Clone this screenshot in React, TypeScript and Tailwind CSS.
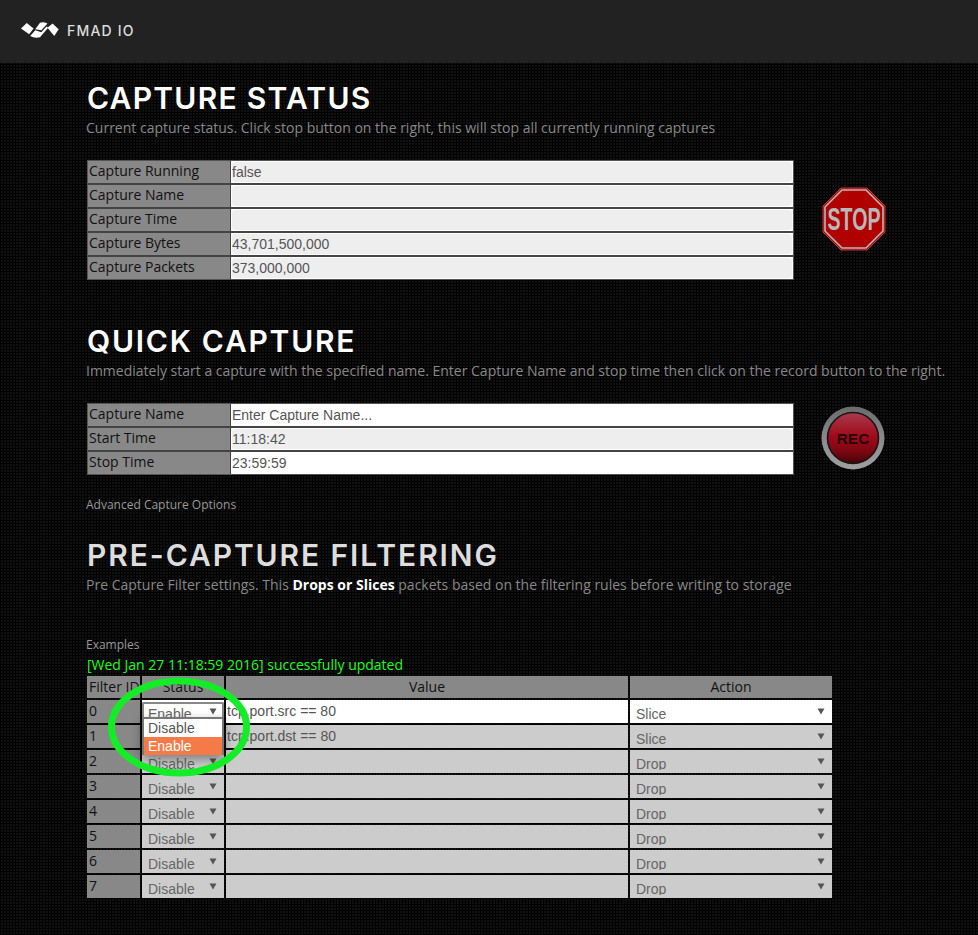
const Caret = () => (
  <svg width="8" height="7" viewBox="0 0 8 7" className="absolute right-[7px] top-[8px]">
    <path d="M0.5 0.5H7.5L4 6.5Z" fill="#555" />
  </svg>
);

const Logo = () => (
  <svg width="38" height="17" viewBox="20 22 112 48">
    <g fill="#fff">
      <path d="M20 40L37 24L57 40L44 57Z" />
      <path d="M62 42L76 23Q87 20 98 25L80 45Z" />
      <path d="M47 62L62 45L80 51L95 34L100 38L76 66Q60 70 47 62Z" />
      <path d="M98 38L113 25L131 42L118 62Z" />
    </g>
  </svg>
);

const StopSign = () => (
  <svg width="64" height="64" viewBox="0 0 64 64" className="-mt-[2px] shrink-0">
    <path d="M19 1H45L63 19V45L45 63H19L1 45V19Z" fill="#b00000" stroke="#c23c3c" strokeWidth="1" />
    <path d="M20 3H44L61 20V44L44 61H20L3 44V20Z" fill="#b00000" stroke="#b8b8b8" strokeWidth="1.6" />
    <text x="32" y="43" textAnchor="middle" fontFamily="'Liberation Sans', sans-serif" fontWeight="700" fontSize="31" fill="#b8b8b8" textLength="53" lengthAdjust="spacingAndGlyphs">STOP</text>
  </svg>
);

const RecButton = () => (
  <svg width="64" height="64" viewBox="0 0 64 64" className="-mt-[3px] shrink-0">
    <defs>
      <linearGradient id="ring" x1="0" y1="0" x2="0" y2="1">
        <stop offset="0" stopColor="#6a6a6a" />
        <stop offset="0.5" stopColor="#8a8a8a" />
        <stop offset="1" stopColor="#a0a0a0" />
      </linearGradient>
      <linearGradient id="red" x1="0" y1="0" x2="0" y2="1">
        <stop offset="0" stopColor="#a83c4c" />
        <stop offset="0.45" stopColor="#a00c1c" />
        <stop offset="0.75" stopColor="#800612" />
        <stop offset="1" stopColor="#450308" />
      </linearGradient>
    </defs>
    <circle cx="32" cy="32" r="31.5" fill="url(#ring)" />
    <circle cx="32" cy="32" r="25.5" fill="url(#red)" stroke="#161616" strokeWidth="1.6" />
    <text x="32" y="37.5" textAnchor="middle" fontFamily="'Liberation Sans', sans-serif" fontWeight="700" fontSize="15.5" fill="#2a0408">REC</text>
  </svg>
);

const InfoRow = ({ label, value, white }: { label: string; value: string; white?: boolean }) => (
  <div className="flex h-6 border-b-2 border-[#444] last:h-[22px] last:border-b-0">
    <div className="w-[142px] shrink-0 bg-[#888] pl-[1px] text-[14px] leading-[20px] text-[#111] font-['Open_Sans',sans-serif]">{label}</div>
    <div className="w-[1px] shrink-0 bg-[#444]" />
    <div className="flex-1 bg-white p-[1px]">
      <div className={`h-full rounded-[3px] text-[14px] leading-[21px] text-[#555] font-['Liberation_Sans',sans-serif] ${white ? "bg-white" : "bg-[#eee]"}`}>{value}</div>
    </div>
  </div>
);

const InfoTable = ({ children }: { children: React.ReactNode }) => (
  <div className="w-[707px] border border-[#555] bg-white">{children}</div>
);

const Heading = ({ children, className }: { children: string; className: string }) => (
  <h2 className={`whitespace-nowrap text-[30px] leading-[38px] font-semibold font-['Inter',sans-serif] ${className}`}>{children}</h2>
);

const Desc = ({ children }: { children: React.ReactNode }) => (
  <p className="whitespace-nowrap text-[14px] leading-[20px] text-[#888] font-['Open_Sans',sans-serif]">{children}</p>
);

const Select = ({ value, white }: { value: string; white?: boolean }) => (
  <div className={`relative h-full pl-[6px] text-[14px] text-[#666] font-['Liberation_Sans',sans-serif] ${white ? "bg-white" : "bg-[#ccc]"}`}>
    <div className="h-[20px] overflow-hidden leading-[29px]">{value}</div>
    <Caret />
  </div>
);

const rows = [
  { id: "0", status: "Enable", value: "tcp.port.src == 80", action: "Slice", white: true },
  { id: "1", status: "Enable", value: "tcp.port.dst == 80", action: "Slice" },
  { id: "2", status: "Disable", value: "", action: "Drop" },
  { id: "3", status: "Disable", value: "", action: "Drop" },
  { id: "4", status: "Disable", value: "", action: "Drop" },
  { id: "5", status: "Disable", value: "", action: "Drop" },
  { id: "6", status: "Disable", value: "", action: "Drop" },
  { id: "7", status: "Disable", value: "", action: "Drop" },
];

const cols = "grid grid-cols-[53px_82px_402px_202px] gap-x-[2px]";

export default function App() {
  return (
    <div className="h-[935px] w-[978px] overflow-hidden bg-[#101010] bg-[repeating-linear-gradient(0deg,#000_0_1px,transparent_1px_3px),repeating-linear-gradient(90deg,#000_0_1px,transparent_1px_3px)]">
      <header className="flex h-[63px] items-center gap-[8px] bg-[#222] pb-[2px] pl-[21px]">
        <Logo />
        <span className="text-[14px] font-medium tracking-[1.2px] text-[#ddd] font-['Inter',sans-serif]">FMAD IO</span>
      </header>

      <main className="relative pl-[87px]">
        <section className="pt-[16px]">
          <Heading className="tracking-[1.25px] text-white">CAPTURE STATUS</Heading>
          <div className="-ml-px mt-[1px]"><Desc>Current capture status. Click stop button on the right, this will stop all currently running captures</Desc></div>
          <div className="mt-[22px] flex items-center gap-[28px]">
            <InfoTable>
              <InfoRow label="Capture Running" value="false" />
              <InfoRow label="Capture Name" value="" />
              <InfoRow label="Capture Time" value="" />
              <InfoRow label="Capture Bytes" value="43,701,500,000" />
              <InfoRow label="Capture Packets" value="373,000,000" />
            </InfoTable>
            <StopSign />
          </div>
        </section>

        <section className="pt-[42px]">
          <Heading className="tracking-[1.75px] text-white">QUICK CAPTURE</Heading>
          <div className="-ml-px mt-[1px]"><Desc>Immediately start a capture with the specified name. Enter Capture Name and stop time then click on the record button to the right.</Desc></div>
          <div className="mt-[22px] flex items-center gap-[27px]">
            <InfoTable>
              <InfoRow label="Capture Name" value="Enter Capture Name..." white />
              <InfoRow label="Start Time" value="11:18:42" />
              <InfoRow label="Stop Time" value="23:59:59" white />
            </InfoTable>
            <RecButton />
          </div>
          <p className="-ml-px mt-[21px] text-[12px] leading-[18px] text-[#999] font-['Open_Sans',sans-serif]">Advanced Capture Options</p>
        </section>

        <section className="pt-[22px]">
          <Heading className="tracking-[1.9px] text-[#ddd]">PRE-CAPTURE FILTERING</Heading>
          <div className="-ml-px mt-[1px]">
            <Desc>Pre Capture Filter settings. This <b className="font-bold text-white">Drops or Slices</b> packets based on the filtering rules before writing to storage</Desc>
          </div>
          <p className="-ml-px mt-[41px] text-[12px] leading-[18px] text-[#999] font-['Open_Sans',sans-serif]">Examples</p>
          <p className="mt-[1px] text-[14px] leading-[20px] text-[#1dff1d] font-['Open_Sans',sans-serif]">[Wed Jan 27 11:18:59 2016] successfully updated</p>

          <div className="relative mt-[1px] w-[745px]">
            <div className={`${cols} h-[24px] text-[14px] leading-[22px] text-[#111] font-['Open_Sans',sans-serif]`}>
              <div className="h-[22px] whitespace-nowrap bg-[#888] pl-[2px]">Filter ID</div>
              <div className="h-[22px] bg-[#888] text-center">Status</div>
              <div className="h-[22px] bg-[#888] text-center">Value</div>
              <div className="h-[22px] bg-[#888] text-center">Action</div>
            </div>
            {rows.map((r) => (
              <div key={r.id} className={`${cols} h-[25px] pb-[2px]`}>
                <div className="bg-[#888] pl-[2px] text-[14px] leading-[22px] text-[#111] font-['Open_Sans',sans-serif]">{r.id}</div>
                <Select value={r.status} white={r.white} />
                <div className={`pl-[1px] text-[14px] leading-[23px] text-[#555] font-['Liberation_Sans',sans-serif] ${r.white ? "bg-white" : "bg-[#ccc]"}`}>{r.value}</div>
                <Select value={r.action} white={r.white} />
              </div>
            ))}

            <div className="absolute left-[55px] top-[26px] h-[16px] w-[82px] rounded-t-[2px] border-x-2 border-t-2 border-[#888]" />
            <div className="absolute left-[55px] top-[41px] h-[38px] w-[82px] border-2 border-[#777] bg-white text-[14px] leading-[18px] text-[#555] shadow-[0_4px_10px_rgba(0,0,0,0.4)] font-['Liberation_Sans',sans-serif]">
              <div className="h-[18px] pl-[4px]">Disable</div>
              <div className="h-[18px] bg-[#f47b47] pl-[4px] text-white">Enable</div>
            </div>

            <svg width="150" height="106" viewBox="0 0 150 106" className="absolute left-[17px] top-[-1px]">
              <ellipse cx="75" cy="52" rx="67.5" ry="46" fill="none" stroke="#14ec27" strokeWidth="7" />
            </svg>
          </div>
        </section>
      </main>
    </div>
  );
}
